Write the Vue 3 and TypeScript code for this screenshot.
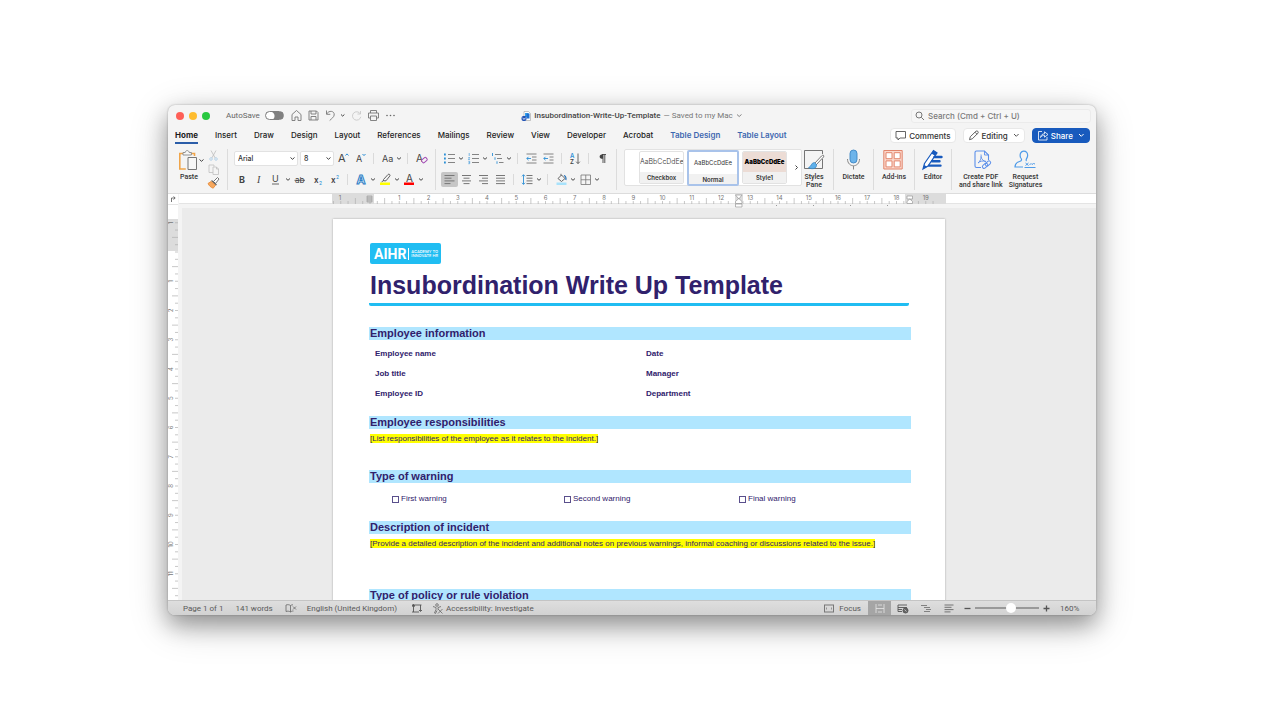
<script setup lang="ts">
import { ref } from 'vue'

interface Tool {
  id: string
  label: string
  kind?: 'tool' | 'drop' | 'sep'
  active?: boolean
}

const sep = (id: string): Tool => ({ id, label: '', kind: 'sep' })

const tabs = ['Home', 'Insert', 'Draw', 'Design', 'Layout', 'References', 'Mailings', 'Review', 'View', 'Developer', 'Acrobat']
const contextTabs = ['Table Design', 'Table Layout']

const fontTop: Tool[] = [
  { id: 'grow', label: 'Increase font size' },
  { id: 'shrink', label: 'Decrease font size' },
  sep('s1'),
  { id: 'case', label: 'Change case', kind: 'drop' },
  sep('s2'),
  { id: 'clear', label: 'Clear formatting' },
]
const fontBottom: Tool[] = [
  { id: 'bold', label: 'Bold' },
  { id: 'italic', label: 'Italic' },
  { id: 'underline', label: 'Underline', kind: 'drop' },
  { id: 'strike', label: 'Strikethrough' },
  { id: 'sub', label: 'Subscript' },
  { id: 'sup', label: 'Superscript' },
  sep('s3'),
  { id: 'effects', label: 'Text effects', kind: 'drop' },
  { id: 'highlight', label: 'Highlight colour', kind: 'drop' },
  { id: 'color', label: 'Font colour', kind: 'drop' },
]
const paraTop: Tool[] = [
  { id: 'bullets', label: 'Bullets', kind: 'drop' },
  { id: 'numbers', label: 'Numbering', kind: 'drop' },
  { id: 'levels', label: 'Multilevel list', kind: 'drop' },
  sep('s4'),
  { id: 'outdent', label: 'Decrease indent' },
  { id: 'indent', label: 'Increase indent' },
  sep('s5'),
  { id: 'sort', label: 'Sort' },
  sep('s6'),
  { id: 'marks', label: 'Show marks' },
]
const paraBottom: Tool[] = [
  { id: 'left', label: 'Align left', active: true },
  { id: 'center', label: 'Centre' },
  { id: 'right', label: 'Align right' },
  { id: 'justify', label: 'Justify' },
  sep('s7'),
  { id: 'spacing', label: 'Line spacing', kind: 'drop' },
  sep('s8'),
  { id: 'shade', label: 'Shading', kind: 'drop' },
  { id: 'borders', label: 'Borders', kind: 'drop' },
]

const rows = [
  { top: fontTop, bottom: fontBottom, fonts: true },
  { top: paraTop, bottom: paraBottom, fonts: false },
]

const T = 'font-family="Inter, sans-serif" fill="#444"'
const bars = (list: [number, number][]) =>
  list.map(([x, w], i) => `<path d="M${x} ${3.5 + i * 2.7}h${w}" stroke="#777" stroke-width="1"/>`).join('')

/* Glyphs on a 17 x 15 grid */
const glyphs: Record<string, string> = {
  grow: `<text x="3" y="11" font-size="11" ${T}>A</text><path d="M10.500 4.500l1.500-1.600 1.500 1.600" stroke="#2b8fd6"/>`,
  shrink: `<text x="4" y="11" font-size="9" ${T}>A</text><path d="M10.500 3l1.500 1.600 1.500-1.600" stroke="#2b8fd6"/>`,
  case: `<text x="3" y="11" font-size="9" ${T}>Aa</text>`,
  clear: `<text x="3" y="11" font-size="10" ${T}>A</text><rect x="8.500" y="7.500" width="5.500" height="3.600" rx="1" transform="rotate(-40 11 9)" fill="#f4f4f4" stroke="#a24bb5"/>`,
  bold: `<text x="5" y="10.500" font-size="9" font-weight="700" ${T}>B</text>`,
  italic: `<text x="6" y="11" font-size="10" font-style="italic" font-family="Liberation Serif, serif" fill="#444">I</text>`,
  underline: `<text x="4" y="10" font-size="9" ${T}>U</text><path d="M4 12h7" stroke="#444" stroke-width=".8"/>`,
  strike: `<text x="3" y="10.500" font-size="8" ${T}>ab</text><path d="M2.500 8.300h10.500" stroke="#444" stroke-width=".8"/>`,
  sub: `<text x="5" y="10.500" font-size="8" font-weight="600" ${T}>x</text><text x="10" y="12.500" font-size="5" fill="#2b8fd6" font-family="Inter, sans-serif">2</text>`,
  sup: `<text x="5" y="11" font-size="8" font-weight="600" ${T}>x</text><text x="10" y="7" font-size="5" fill="#2b8fd6" font-family="Inter, sans-serif">2</text>`,
  effects: `<text x="3.500" y="12" font-size="12" font-weight="700" font-family="Inter, sans-serif" fill="#e8f4fd" stroke="#2b7cc4" stroke-width="1">A</text>`,
  highlight: `<path d="M6.500 7.500l4.500-5c1-1 2.600.3 1.900 1.400L9 8.800H6.500zM6.500 8.500l-2 1.500" stroke="#555" stroke-width=".9"/><path d="M3 10.500h10v2.500H3z" fill="#ffff00"/>`,
  color: `<text x="5" y="9.500" font-size="10" ${T}>A</text><path d="M3 10.500h10v2.500H3z" fill="#ff0000"/>`,
  bullets: `<path d="M7 3.500h7M7 7.500h7M7 11.500h7" stroke="#777" stroke-width=".9"/><path d="M3 2.600h1.800v1.800H3zM3 6.600h1.800v1.800H3zM3 10.600h1.800v1.800H3z" fill="#2b8fd6"/>`,
  numbers: `<path d="M7 3.500h7M7 7.500h7M7 11.500h7" stroke="#777" stroke-width=".9"/><path d="M4.200 2v3M3.300 6.500h1.400l-1.300 2h1.500M3.300 10.300h1.400v2.400H3.300M3.600 11.500h1" stroke="#2b8fd6" stroke-width=".6"/>`,
  levels: `<path d="M6 3.500h6M8 7.500h5M10 11.500h4.500" stroke="#777" stroke-width=".9"/><path d="M3.500 2v3M6 6.300v2.500M8 10.300v2.500" stroke="#2b8fd6" stroke-width=".9"/>`,
  outdent: `<path d="M3.500 3h10M9 6h4.500M9 9h4.500M3.500 12h10" stroke="#777" stroke-width=".9"/><path d="M8 7.500H3.800M5.500 5.800L3.800 7.500l1.700 1.700" stroke="#2b8fd6" stroke-width=".9"/>`,
  indent: `<path d="M3.500 3h10M9.500 6h4M9.500 9h4M3.500 12h10" stroke="#777" stroke-width=".9"/><path d="M8 7.500H3.800M5.500 5.800L3.800 7.500l1.700 1.700" stroke="#2b8fd6" stroke-width=".9"/>`,
  sort: `<text x="3" y="7" font-size="6" font-weight="600" fill="#2b8fd6" font-family="Inter, sans-serif">A</text><text x="3" y="13" font-size="6" font-weight="600" ${T}>Z</text><path d="M11 2.500v10M9.200 10.700l1.800 1.900 1.800-1.900" stroke="#555" stroke-width=".9"/>`,
  marks: `<path d="M9 3.500v8.500M10.800 3.500v8.500M12 3.500H8" stroke="#444" stroke-width=".9"/><path d="M9 3.200C4.500 3 4.500 8 9 7.800z" fill="#444"/>`,
  left: bars([[3.500, 10], [3.500, 7], [3.500, 10], [3.500, 6]]),
  center: bars([[4, 9], [5.500, 6], [4, 9], [5.500, 6]]),
  right: bars([[4, 9], [7, 6], [4, 9], [7, 6]]),
  justify: bars([[4, 9], [4, 9], [4, 9], [4, 9]]),
  spacing: `<path d="M7.500 3.500h6M7.500 6.200h6M7.500 8.900h6M7.500 11.600h6" stroke="#666" stroke-width=".9"/><path d="M4.500 2.800v9.500M3 4.300l1.500-1.600L6 4.300M3 10.800l1.500 1.600L6 10.800" stroke="#2b8fd6" stroke-width=".9"/>`,
  shade: `<path d="M5 6.500L8.500 3 12 6.500l-3.500 3zM8 3.500V1.800" stroke="#555" stroke-width=".9"/><path d="M11 3.500c1.500.6 2.300 2.300 1.800 4.500" stroke="#1f6fb8" stroke-width="1.200"/><path d="M3.500 10.500h10v2.500h-10z" fill="#a8e2fb"/>`,
  borders: `<path d="M4 3h9.500v9.500H4zM8.750 3v9.500M4 7.750h9.500" stroke="#777" stroke-width=".8"/>`,
  home: `<path d="M4 6.500l4.500-4L13 6.500v6H10V9H7v3.500H4z" stroke="#777" stroke-width=".9"/>`,
  save: `<path d="M4 3h7.500L13 4.500V12H4zM6 3v3h5V3M6 12V8.500h5V12" stroke="#777" stroke-width=".9"/>`,
  undo: `<path d="M4.500 2.500v3.800h3.800M4.700 6c2-4 8-3.300 7.500 1-.2 2-2.500 3.500-4.500 5.500" stroke="#777" stroke-width=".9"/>`,
  redo: `<path d="M12.500 3v3H9.500M12.300 5.800a4.200 4.200 0 1 0 .5 3" stroke="#cacaca" stroke-width=".9"/>`,
  print: `<path d="M5.500 5V2.500h6V5M5.500 10H3.500V5h10v5h-2M5.500 8h6v4.500h-6z" stroke="#777" stroke-width=".9"/>`,
  more: `<circle cx="5" cy="7.500" r=".8" fill="#666"/><circle cx="8.500" cy="7.500" r=".8" fill="#666"/><circle cx="12" cy="7.500" r=".8" fill="#666"/>`,
  cut: `<path d="M6 2.500l4.200 7.500M11 2.500L6.800 10" stroke="#bdbdbd" stroke-width=".8"/><circle cx="6" cy="11" r="1.300" stroke="#a9cbe6" stroke-width=".8"/><circle cx="11" cy="11" r="1.300" stroke="#a9cbe6" stroke-width=".8"/>`,
  copy: `<path d="M8 10.500H4V3h5v1.500M8 5h3.500L13.500 7v5.500H8zM11.500 5v2h2" stroke="#c0c0c0" stroke-width=".8"/>`,
  brush: `<path d="M8.500 6.500l4-4 1.500 1.500-3.500 4.500z" fill="#fff" stroke="#666" stroke-width=".9"/><path d="M6.500 5.500l5 4.500" stroke="#666" stroke-width="1.300"/><path d="M6 6.500L3 8.500c1 2.200 3 4 5.200 4.700l2.300-3z" fill="#f5a860" stroke="#e8862f" stroke-width=".8"/>`,
}

/* Large glyphs on a 24 x 22 grid */
const bigGlyphs: Record<string, string> = {
  paste: `<path d="M7 4.500H2.800v15.500h6M14 4.500h3.500V7" stroke="#f0a54a" stroke-width="1.600"/><path d="M6 6V3.500h2.200c.4-2.600 3.600-2.600 4 0h2.200V6z" fill="#f7f7f7" stroke="#888" stroke-width=".9"/><path d="M11 8.500h8.500v12H11z" fill="#f7f7f7" stroke="#777" stroke-width="1"/>`,
  styles: `<path d="M20.500 10v9.500h-18v-18h18V5" stroke="#666" stroke-width=".9"/><path d="M21.500 8l-7.500 8-1.500-1.500L19.500 7c1.500-1.500 3-.5 2 1z" fill="#fff" stroke="#555" stroke-width=".8"/><path d="M12.500 13.500c-3.500 0-3 4.200-6 5.200 4 2 8.500 1 8-3.200z" fill="#5fb0ea" stroke="#2f7fc0" stroke-width=".7"/>`,
  dictate: `<rect x="8" y="1" width="7" height="13" rx="3.500" fill="#6db4ea" stroke="#3c86c4" stroke-width=".9"/><path d="M5.500 10c0 9 12 9 12 0M11.500 17v3.500" stroke="#888" stroke-width="1"/>`,
  addins: `<path d="M1.800 1.500h18.400v18.500H1.800z" fill="#fbd8cc" stroke="#e2866d" stroke-width="1"/><path d="M4 3.700h6v6H4zM12.200 3.700h6v6h-6zM4 11.900h6v6H4zM12.200 11.900h6v6h-6z" fill="#fff" stroke="#e2866d" stroke-width="1"/>`,
  editor: `<path d="M3.500 14.500L12.500 1.500l3.500 2.300L7 17 2 20z" fill="#fff" stroke="#185abd" stroke-width="1.200"/><path d="M12.500 1.500l3.500 2.300-2 3-3.600-2.300z" fill="#185abd"/><path d="M13.500 8h7M11 12.300h7.500M8 16.600h11.500" stroke="#185abd" stroke-width="2.400" stroke-linecap="round"/><path d="M2 20l1.200-4 3 1.800z" fill="#185abd"/>`,
  pdf: `<path d="M12 18.500H7.500a1.500 1.500 0 0 1-1.500-1.500V3.500A1.500 1.500 0 0 1 7.500 2h8L19.500 6v5" stroke="#5b8fea" stroke-width="1.100"/><path d="M15.500 2v4h4M9 14c3-2 3.500-7 3-8.500M12 7.500c.5 3 2.500 4.700 5 5M9 14c2-2 5-2.500 8-1.500" stroke="#5b8fea" stroke-width=".9"/><rect x="13.200" y="15.200" width="6" height="3.400" rx="1.700" transform="rotate(-42 16 17)" stroke="#5b8fea"/><rect x="16" y="12.800" width="6" height="3.400" rx="1.700" transform="rotate(-42 19 14.500)" stroke="#5b8fea"/>`,
  sign: `<path d="M10 18H2c0-4 2-4.800 4.500-5.500 3-.8 2.200-2.500 1-4C5 .2 16 .2 14.500 7.500c-.5 2-2.200 3.200-1 4.500" stroke="#4f9be8" stroke-width="1.200"/><path d="M12.500 14l3 2.500M15.500 14l-3 2.500M16.500 16l1.500-1.500 1 1 1.500-1 1.500.5M11.500 18.500h11" stroke="#4f9be8" stroke-width="1"/>`,
}

const styleCards = [
  { name: 'Checkbox', cls: 'thin' },
  { name: 'Normal', cls: 'normal' },
  { name: 'Style1', cls: 'heavy' },
]

const bigTools = [
  { id: 'styles', lines: ['Styles', 'Pane'], cls: 'w31' },
  { id: 'dictate', lines: ['Dictate'], cls: 'w40' },
  { id: 'addins', lines: ['Add-ins'], cls: 'w41' },
  { id: 'editor', lines: ['Editor'], cls: 'w37' },
]

const UNIT = 29.25
const ZERO = 38
const hNums = Array.from({ length: 19 }, (_, i) => ({ n: i + 1, x: ZERO + UNIT * (i + 1) })).concat([{ n: 1, x: 8 }])
const hTicks = Array.from({ length: 83 }, (_, i) => ({ x: ZERO + (UNIT / 4) * (i - 5), tall: (i - 5 + 8) % 4 === 2 })).filter(t => t.x > 1 && t.x < 613)
const vNums = Array.from({ length: 11 }, (_, i) => ({ n: i + 1, y: 47 + UNIT * (i + 1) })).concat([{ n: 1, y: 18 }])
const vTicks = Array.from({ length: 52 }, (_, i) => ({ y: 47 + (UNIT / 4) * (i - 4), mid: i % 4 === 2 }))

const font = ref('Arial')
const size = ref('8')
const zoom = ref(50)
const warnings = ['First warning', 'Second warning', 'Final warning']
const people = [
  ['Employee name', 'Date'],
  ['Job title', 'Manager'],
  ['Employee ID', 'Department'],
]
</script>

<template>
  <div class="desktop">
    <main class="window">
      <header class="titlebar">
        <div class="tb-left">
          <button class="light red" aria-label="Close"></button>
          <button class="light amber" aria-label="Minimise"></button>
          <button class="light green" aria-label="Zoom"></button>
          <label class="autosave">AutoSave<input type="checkbox" class="switch"></label>
          <button v-for="g in ['home', 'save']" :key="g" class="tool" :aria-label="g"><svg width="17" height="15" fill="none" v-html="glyphs[g]"></svg></button>
          <button class="drop" aria-label="undo">
            <svg width="17" height="15" fill="none" v-html="glyphs.undo"></svg>
            <svg class="chev" width="7" height="5" fill="none"><path d="M2 1.500l1.700 1.600 1.700-1.600" stroke="#444" /></svg>
          </button>
          <button v-for="g in ['redo', 'print', 'more']" :key="g" class="tool" :aria-label="g"><svg width="17" height="15" fill="none" v-html="glyphs[g]"></svg></button>
        </div>
        <div class="doc-name">
          <svg width="10" height="10" fill="none"><path d="M3 .5h4.500L9.500 2.500V9.500H3z" fill="#fff" stroke="#aaa" stroke-width=".7" /><path d="M4 2h3.500v4H4z" fill="#35a2ee" /><path d="M5.500 2.500H8.500v5h-3z" fill="#1d6fd0" /><rect x=".5" y="5" width="5" height="5" rx="2" fill="#1d4fb5" /><path d="M1.700 6.500l.7 2 .7-1.500.7 1.500.7-2" stroke="#fff" stroke-width=".5" /></svg>
          <strong>Insubordination-Write-Up-Template</strong>
          <span>— Saved to my Mac</span>
          <svg width="7" height="5" fill="none"><path d="M1 1.500l2.200 2L5.500 1.500" stroke="#777" stroke-width=".9" /></svg>
        </div>
        <label class="search">
          <svg width="10" height="10" fill="none" stroke="#777"><circle cx="4" cy="4" r="3" /><path d="M6.300 6.300L9 9" /></svg>
          <input type="text" placeholder="Search (Cmd + Ctrl + U)" aria-label="Search">
        </label>
      </header>

      <nav class="tabs">
        <button v-for="(t, i) in tabs" :key="t" class="tab" :class="{ current: i === 0 }">{{ t }}</button>
        <button v-for="t in contextTabs" :key="t" class="tab context">{{ t }}</button>
        <div class="actions">
          <button class="pill"><svg width="12" height="11" fill="none"><path d="M1 1.500h9.500v6.500H5L3 10V8H1z" stroke="#555" stroke-width=".9" stroke-linejoin="round" /></svg>Comments</button>
          <button class="pill"><svg width="12" height="11" fill="none"><path d="M1.500 9.700l.8-3L8 1.200c1.200-1 3 .7 2 1.900L4.300 8.800zM7 2.200l2 2" stroke="#555" stroke-width=".9" /></svg>Editing<svg class="end" width="7" height="5" fill="none"><path d="M1 1l2.300 2.300L5.600 1" stroke="#555" /></svg></button>
          <button class="pill share"><svg width="12" height="11" fill="none" stroke="#fff" stroke-width=".8"><path d="M5 1.500H1.500v8.500h8.500V7M3.500 7.500c.3-2.500 2-3.700 4-3.700V1.800l3.500 2.700-3.500 2.700V5.300c-1.700 0-3 .6-4 2.200z" /></svg>Share<svg class="end" width="7" height="5" fill="none"><path d="M1 1l2.300 2.300L5.600 1" stroke="#fff" /></svg></button>
        </div>
      </nav>

      <section class="ribbon">
        <div class="paste-group">
          <div class="paste">
            <button class="big"><svg width="24" height="22" fill="none" v-html="bigGlyphs.paste"></svg><span>Paste</span></button>
            <svg class="chev" width="7" height="5" fill="none"><path d="M1.500 1.500l2 1.800 2-1.800" stroke="#444" /></svg>
          </div>
          <div class="clip">
            <button v-for="g in ['cut', 'copy', 'brush']" :key="g" class="tool" :aria-label="g"><svg width="17" height="15" fill="none" v-html="glyphs[g]"></svg></button>
          </div>
        </div>

        <div v-for="(group, gi) in rows" :key="gi" class="group" :class="{ para: !group.fonts }">
          <div v-for="(line, li) in [group.top, group.bottom]" :key="li" class="line">
            <template v-if="group.fonts && li === 0">
              <span class="select-box wide"><select v-model="font" aria-label="Font"><option>Arial</option></select><svg width="7" height="5" fill="none"><path d="M1.500 1.500l2 1.800 2-1.800" stroke="#444" /></svg></span>
              <span class="select-box"><select v-model="size" aria-label="Font size"><option>8</option></select><svg width="7" height="5" fill="none"><path d="M1.500 1.500l2 1.800 2-1.800" stroke="#444" /></svg></span>
            </template>
            <template v-for="t in line" :key="t.id">
              <i v-if="t.kind === 'sep'" class="sep"></i>
              <button v-else :class="[t.kind || 'tool', { active: t.active }]" :aria-label="t.label">
                <svg width="17" height="15" fill="none" v-html="glyphs[t.id]"></svg>
                <svg v-if="t.kind === 'drop'" class="chev" width="7" height="5" fill="none"><path d="M1 1.500l2 1.800 2-1.800" stroke="#444" /></svg>
              </button>
            </template>
          </div>
        </div>

        <div class="gallery">
          <button v-for="(c, i) in styleCards" :key="c.name" class="card" :class="{ picked: i === 1 }">
            <span class="sample" :class="c.cls">AaBbCcDdEe</span>
            <span class="card-name">{{ c.name }}</span>
          </button>
          <svg width="5" height="7" fill="none"><path d="M1.500 1.500l2 2-2 2" stroke="#444" /></svg>
        </div>

        <button v-for="b in bigTools" :key="b.id" class="big ruled" :class="b.cls">
          <svg width="24" height="22" fill="none" v-html="bigGlyphs[b.id]"></svg>
          <span v-for="l in b.lines" :key="l">{{ l }}</span>
        </button>
        <button class="big pdf"><svg width="24" height="22" fill="none" v-html="bigGlyphs.pdf"></svg><span>Create PDF</span><span>and share link</span></button>
        <button class="big"><svg width="24" height="22" fill="none" v-html="bigGlyphs.sign"></svg><span>Request</span><span>Signatures</span></button>
      </section>

      <div class="h-ruler">
        <div class="corner"><svg width="10" height="10" fill="none"><path d="M3.500 8V4H7M5.500 2.500L7.200 4 5.500 5.500" stroke="#555" stroke-width=".8" /></svg></div>
        <div class="h-track">
          <svg width="614" height="14" fill="none">
            <path d="M0 0h42v10H0zM573 0h41v10h-41z" fill="#dcdcdc" />
            <path v-for="t in hTicks" :key="t.x" :d="`M${t.x} ${t.tall ? 4 : 7}V10`" stroke="#b0b0b0" stroke-width=".7" />
            <text v-for="n in hNums" :key="n.x" :x="n.x" y="6" text-anchor="middle" class="num">{{ n.n }}</text>
            <path d="M35 2h5v6h-5zM35 4h5M35 6h5" fill="#c9c9c9" stroke="#999" stroke-width=".6" />
            <path d="M403 0h8v10h-8z" fill="#dcdcdc" />
            <g fill="#fff" stroke="#999" stroke-width=".7"><path d="M403.500 1h6.500l-3.200 4zM403.500 9.500V7.500l3.300-3 3.200 3v2zM403.500 10h6.500v3h-6.500z" /><path d="M575 2h5.500v3H575zM575 9.500V7.500l2.800-2.500 2.700 2.500v2z" /></g>
            <path d="M444 11.500h1M481 11.500h1M518 11.500h1M555 11.500h1" stroke="#999" />
          </svg>
        </div>
      </div>

      <div class="work">
        <div class="v-ruler">
          <svg width="10" height="396" fill="none">
            <path d="M0 14h10v32H0z" fill="#dcdcdc" />
            <path v-for="t in vTicks" :key="t.y" :d="`M${t.mid ? 4 : 7} ${t.y}H10`" stroke="#b0b0b0" stroke-width=".7" />
            <text v-for="n in vNums" :key="n.y" text-anchor="middle" class="num" :transform="`translate(5 ${n.y}) rotate(-90)`">{{ n.n }}</text>
          </svg>
        </div>
        <div class="canvas">
          <article class="page">
            <div class="logo"><b>AIHR</b><span>ACADEMY TO<br>INNOVATE HR</span></div>
            <h1>Insubordination Write Up Template</h1>
            <h2>Employee information</h2>
            <table>
              <tbody>
                <tr v-for="r in people" :key="r[0]"><th v-for="c in r" :key="c" scope="row">{{ c }}</th></tr>
              </tbody>
            </table>
            <h2>Employee responsibilities</h2>
            <p class="short"><mark>[List responsibilities of the employee as it relates to the incident.]</mark></p>
            <h2>Type of warning</h2>
            <div class="options">
              <label v-for="w in warnings" :key="w"><input type="checkbox">{{ w }}</label>
            </div>
            <h2>Description of incident</h2>
            <p class="long"><mark>[Provide a detailed description of the incident and additional notes on previous warnings, informal coaching or discussions related to the issue.]</mark></p>
            <h2>Type of policy or rule violation</h2>
          </article>
        </div>
      </div>

      <footer class="status">
        <span>Page 1 of 1</span>
        <span>141 words</span>
        <svg width="12" height="11" fill="none" stroke="#666" stroke-width=".8"><path d="M5.500 2.500C4 1.500 2.500 1.500 1 2v6.500c1.500-.5 3-.5 4.500.5C7 8 7.500 8 8.500 8M5.500 2.500V9M5.500 2.500C6.500 2 7 1.700 8 1.800M8 3.500l3 3M11 3.500l-3 3" /></svg>
        <span class="lang">English (United Kingdom)</span>
        <svg width="12" height="11" fill="none" stroke="#555" stroke-width=".9"><path d="M2.500 4v5M1 9h7M4 2h6.500M9.500 2v6M8 7l1.500 1.500L11 7" /><circle cx="2.500" cy="2.500" r="1.500" fill="#555" stroke="none" /></svg>
        <span class="access"><svg width="12" height="11" fill="none" stroke="#666" stroke-width=".8"><circle cx="5" cy="2" r="1.300" /><path d="M1 3.500l3 1v2L2.500 10l1 .5L5 7.500M9 3.500l-3 1v2M6 6l4.500 4.500M10.500 6L6 10.500" /></svg>Accessibility: Investigate</span>
        <div class="views">
          <button class="focus"><svg width="12" height="11" fill="none" stroke="#777"><rect x="1.500" y="2" width="9" height="7" /><path d="M3.500 4.500v2M8.500 4.500v2" stroke-width=".7" /></svg>Focus</button>
          <button class="view on" aria-label="Print layout"><svg width="12" height="11" fill="none" stroke="#e6e6e6"><path d="M2 1v9M10 1v9M2 5.500h8M4 2h4M4 9h4" stroke-width=".8" /></svg></button>
          <button class="view" aria-label="Web layout"><svg width="12" height="11" fill="none" stroke="#555"><path d="M1 2h9M1 4.500h9M1 6.500h4M1 2v6.500h4" stroke-width=".9" /><circle cx="8.500" cy="7.500" r="2.500" fill="#666" /><path d="M7.500 6.500l2 2" stroke="#ddd" stroke-width=".7" /></svg></button>
          <button class="view" aria-label="Outline"><svg width="12" height="11" fill="none" stroke="#777"><path d="M1 2.500h6M4 4.500h6M6 6.500h5M4 8.500h6" stroke-width=".9" /></svg></button>
          <button class="view" aria-label="Draft"><svg width="12" height="11" fill="none" stroke="#666"><path d="M1.500 2h9M1.500 4.300h7M1.500 6.600h9M1.500 8.900h6" stroke-width=".9" /></svg></button>
          <button class="step" aria-label="Zoom out"><svg width="7" height="7"><path d="M.5 3.500h6" stroke="#555" stroke-width="1.300" /></svg></button>
          <input v-model="zoom" type="range" min="0" max="88" class="zoom" aria-label="Zoom">
          <button class="step" aria-label="Zoom in"><svg width="7" height="7"><path d="M.5 3.500h6M3.500 .5v6" stroke="#555" stroke-width="1.300" /></svg></button>
          <span class="pct">160%</span>
        </div>
      </footer>
    </main>
  </div>
</template>

<style>
body {
  margin: 0;
  background: #fff;
}
</style>

<style scoped>
* {
  box-sizing: border-box;
}
.desktop {
  display: flex;
  height: 100vh;
  min-height: 400px;
  padding: 105px 184px 105px 168px;
  font-family: Roboto, "Liberation Sans", sans-serif;
  font-size: 8px;
  color: #333;
}
button {
  padding: 0;
  border: 0;
  background: none;
  font: inherit;
  color: inherit;
}
svg {
  display: block;
  flex: none;
}
.window {
  display: flex;
  flex: 1;
  flex-direction: column;
  min-width: 0;
  overflow: hidden;
  border-radius: 7px;
  background: #f4f4f4;
  box-shadow: 0 0 2px rgba(0, 0, 0, 0.3), 0 10px 22px rgba(0, 0, 0, 0.32), 0 10px 40px rgba(0, 0, 0, 0.2);
}
.titlebar {
  display: grid;
  grid-template-columns: 1fr auto 1fr;
  align-items: center;
  height: 21px;
  flex: none;
}
.tb-left {
  display: flex;
  align-items: center;
  padding-left: 8px;
}
.tb-left .drop {
  width: 26px;
}
.light {
  width: 8px;
  height: 8px;
  margin-right: 5px;
  border-radius: 50%;
}
.red { background: #fe5f57; }
.amber { background: #febc2e; }
.green { background: #28c840; }
.autosave {
  display: flex;
  align-items: center;
  gap: 5px;
  margin: 0 4px 0 11px;
  color: #666;
}
.switch {
  appearance: none;
  width: 19px;
  height: 9px;
  margin: 0;
  border: 1px solid #808080;
  border-radius: 5px;
  background: radial-gradient(circle at 4px 4px, #fff 4px, #808080 5px);
}
.doc-name {
  display: flex;
  align-items: center;
  gap: 3px;
  color: #777;
}
.doc-name strong {
  font-weight: 500;
  color: #444;
}
.search {
  display: flex;
  align-items: center;
  justify-self: end;
  gap: 3px;
  width: 180px;
  height: 14px;
  margin-right: 5px;
  padding-left: 3px;
  border: 1px solid #ebebeb;
  border-radius: 3px;
  background: #f6f6f6;
}
.search input {
  flex: 1;
  min-width: 0;
  padding: 0;
  border: 0;
  background: none;
  font: 500 8px Inter, sans-serif;
}
.search input::placeholder {
  color: #7a7a7a;
}
.tabs {
  display: flex;
  align-items: center;
  gap: 17px;
  height: 19px;
  flex: none;
  padding: 0 6px 0 7px;
}
.tab {
  height: 17px;
  padding-top: 2px;
  border-bottom: 2px solid transparent;
  font: 500 8px/13px Inter, sans-serif;
  white-space: nowrap;
  color: #1c1c1c;
}
.current {
  border-bottom-color: #2b5da8;
  font-weight: 700;
}
.context {
  font-weight: 600;
  color: #3d67b0;
}
.actions {
  display: flex;
  gap: 7px;
  margin-left: auto;
}
.pill {
  display: flex;
  align-items: center;
  gap: 2px;
  height: 15px;
  padding: 0 4px;
  border: 1px solid #e8e8e8;
  border-radius: 4px;
  background: #fff;
  font: 500 8px Inter, sans-serif;
}
.pill .end {
  margin-left: 3px;
}
.share {
  border-color: #185abd;
  background: #185abd;
  color: #fff;
}
.ribbon {
  display: flex;
  height: 49px;
  flex: none;
  padding: 4px 0 3px;
  border-bottom: 1px solid #dcdcdc;
}
.paste-group {
  display: flex;
  width: 60px;
  flex: none;
  padding-left: 9px;
  border-right: 1px solid #dcdcdc;
}
.paste {
  display: flex;
}
.paste > .chev {
  margin: 9px 0 0 -3px;
}
.clip {
  display: flex;
  flex-direction: column;
  justify-content: space-between;
  height: 40px;
}
.clip .tool {
  height: 13px;
}
.big {
  display: flex;
  flex-direction: column;
  align-items: center;
  flex: none;
  font-size: 7px;
  line-height: 8px;
  font-weight: 500;
  white-space: nowrap;
  color: #333;
}
.big svg {
  margin-bottom: 2px;
}
.ruled {
  border-right: 1px solid #dcdcdc;
}
.w31 {
  width: 32px;
  padding-right: 7px;
}
.w40 { width: 40px; }
.w41 { width: 41px; }
.w37 { width: 37px; }
.pdf {
  margin: 0 6px 0 7px;
}
.group {
  display: flex;
  flex-direction: column;
  gap: 6px;
  width: 208px;
  flex: none;
  padding: 2px 0 0 6px;
  border-right: 1px solid #dcdcdc;
}
.para {
  width: 181px;
  padding-left: 5px;
}
.line {
  display: flex;
  align-items: center;
  height: 15px;
}
.tool {
  display: flex;
  align-items: center;
  width: 17px;
  height: 15px;
}
.drop {
  display: flex;
  align-items: center;
  width: 24px;
  height: 15px;
}
.active {
  border-radius: 2px;
  background: #c6c6c6;
}
.sep {
  width: 1px;
  height: 11px;
  margin: 0 5px 0 4px;
  background: #dadada;
}
.select-box {
  display: flex;
  align-items: center;
  width: 34px;
  height: 15px;
  margin-right: 1px;
  padding: 0 1px 0 3px;
  border: 1px solid #e2e2e2;
  border-radius: 2px;
  background: #fff;
}
.wide {
  width: 64px;
  margin-right: 2px;
}
.select-box select {
  appearance: none;
  flex: 1;
  min-width: 0;
  padding: 0;
  border: 0;
  background: none;
  font: 500 7px Inter, sans-serif;
  color: #333;
}
.gallery {
  display: flex;
  align-items: center;
  gap: 3px;
  width: 178px;
  height: 37px;
  flex: none;
  margin-left: 7px;
  padding-left: 14px;
  border: 1px solid #e2e2e2;
  border-radius: 2px;
  background: #fff;
}
.gallery > svg {
  margin-left: 4px;
}
.card {
  display: flex;
  flex-direction: column;
  width: 45px;
  height: 33px;
  overflow: hidden;
  border: 1px solid #e2e2e2;
  border-radius: 2px;
  background: #fff;
  font-family: Inter, sans-serif;
}
.picked {
  width: 52px;
  height: 36px;
  border: 2px solid #a9c3ea;
}
.sample {
  width: 100%;
  flex: 1;
  line-height: 20px;
  white-space: nowrap;
  text-align: center;
  color: #333;
}
.thin {
  font-size: 7px;
  font-weight: 300;
}
.normal {
  font-size: 6px;
  line-height: 22px;
}
.heavy {
  background: #ecdcd5;
  font-size: 6px;
  font-weight: 900;
  color: #000;
}
.card-name {
  width: 100%;
  line-height: 11px;
  background: #f1f1f1;
  font-size: 6px;
  font-weight: 600;
}
.h-ruler {
  display: flex;
  height: 14px;
  flex: none;
}
.corner {
  width: 10px;
  height: 10px;
  background: #fff;
}
.h-track {
  display: flex;
  justify-content: center;
  flex: 1;
  min-width: 0;
  margin-left: 1px;
  padding-left: 3px;
  background: linear-gradient(#fff 9px, #e4e4e4 9px, #e4e4e4 10px, #f4f4f4 10px);
}
.num {
  font-family: Inter, sans-serif;
  font-size: 6px;
  fill: #777;
}
.work {
  display: flex;
  flex: 1;
  min-height: 0;
  margin-top: -4px;
}
.v-ruler {
  width: 10px;
  flex: none;
  overflow: hidden;
  border-top: 1px solid #e4e4e4;
  background: #fff;
}
.canvas {
  display: flex;
  justify-content: center;
  flex: 1;
  min-width: 0;
  overflow: hidden;
  margin: 4px 0 0 4px;
  padding-top: 11px;
  background: #ebebeb;
}
.page {
  width: 100%;
  max-width: 612px;
  height: max-content;
  min-height: 100%;
  padding: 24px 34px 24px 36px;
  background: #fff;
  box-shadow: 0 0 2px rgba(0, 0, 0, 0.3);
  font-family: "Liberation Sans", Arial, sans-serif;
  font-size: 8px;
  line-height: 10px;
  color: #30216c;
}
.logo {
  display: flex;
  align-items: center;
  gap: 2px;
  width: 71px;
  height: 21px;
  margin-left: 1px;
  padding-left: 4px;
  border-radius: 2px;
  background: #20bdf2;
  color: #fff;
}
.logo b {
  font: 700 14px/20px Roboto, sans-serif;
}
.logo span {
  padding: 2px 0 2px 2px;
  border-left: 1px solid #fff;
  font: 500 4px/4px Inter, sans-serif;
  white-space: nowrap;
}
h1 {
  margin: 6px 2px 21px 0;
  padding: 0 0 3px 1px;
  border-bottom: 3px solid #20bdf2;
  border-radius: 2px;
  font-size: 25px;
  line-height: 30px;
}
h2 {
  margin: 0;
  padding-left: 1px;
  background: #b0e6ff;
  font-size: 11px;
  line-height: 13px;
}
table {
  width: 100%;
  margin: 4px 0 12px;
  border-spacing: 0;
  table-layout: fixed;
}
th {
  height: 20px;
  padding: 0 0 0 6px;
  text-align: left;
}
p {
  margin: 5px 0 26px;
  padding-left: 1px;
}
.long {
  margin-bottom: 40px;
}
mark {
  background: #ff0;
  color: inherit;
}
.options {
  display: grid;
  grid-template-columns: 172fr 175fr 172fr;
  margin: 11px 0 17px;
  padding-left: 23px;
}
.options label {
  display: flex;
  align-items: center;
  gap: 2px;
}
.options input {
  appearance: none;
  width: 7px;
  height: 7px;
  margin: 0;
  border: 1px solid #5a4f8c;
}
.status {
  display: flex;
  align-items: center;
  gap: 12px;
  height: 15px;
  flex: none;
  padding-left: 15px;
  border-top: 1px solid #c4c4c4;
  background: linear-gradient(#dedede, #d2d2d2);
  white-space: nowrap;
  color: #5a5a5a;
}
.lang {
  margin-left: -2px;
  margin-right: 2px;
}
.access {
  display: flex;
  align-items: center;
  gap: 2px;
  margin-left: -3px;
}
.views {
  display: flex;
  align-items: center;
  align-self: stretch;
  margin-left: auto;
}
.focus {
  display: flex;
  align-items: center;
  gap: 4px;
  margin-right: 7px;
}
.view {
  display: flex;
  align-items: center;
  justify-content: center;
  align-self: stretch;
  width: 23px;
}
.on {
  background: #a5a5a5;
}
.step {
  margin: 0 4px;
}
.zoom {
  appearance: none;
  width: 64px;
  height: 10px;
  margin: 0;
  background: linear-gradient(transparent 4px, #999 4px, #999 6px, transparent 6px);
}
.zoom::-webkit-slider-thumb {
  appearance: none;
  width: 10px;
  height: 10px;
  border-radius: 50%;
  background: #fff;
}
.pct {
  width: 42px;
  padding-left: 6px;
}
</style>
